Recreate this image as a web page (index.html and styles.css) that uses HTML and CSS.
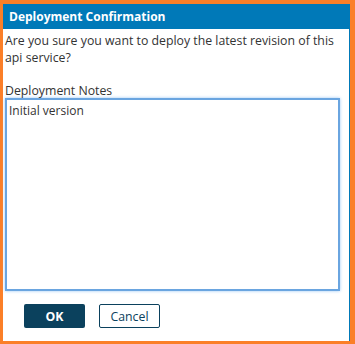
FILE: index.html
```html
<!DOCTYPE html>
<html lang="en">
<head>
  <meta charset="UTF-8">
  <title>Deployment Confirmation</title>
  <link rel="stylesheet" href="styles.css">
</head>
<body>
<div class="dialog">
  <div class="dialog-title">Deployment Confirmation</div>
  <div class="dialog-body">
    <p class="message">Are you sure you want to deploy the latest revision of this api service?</p>
    <label class="notes-label" for="notes">Deployment Notes</label>
    <textarea id="notes" class="notes">Initial version</textarea>
  </div>
  <div class="dialog-actions">
    <button class="btn btn-primary">OK</button>
    <button class="btn btn-secondary">Cancel</button>
  </div>
</div>
</body>
</html>
```

FILE: styles.css
```css
html, body {
  margin: 0;
  height: 100%;
}
body {
  background: #fb7f28;
  font-family: 'Open Sans', sans-serif;
  color: #333;
  padding: 4px 5px 3px 3px;
  box-sizing: border-box;
}
.dialog {
  background: #fff;
  height: 100%;
  border-right: 1px solid #0079b8;
  display: flex;
  flex-direction: column;
}
.dialog-title {
  background: #0079b8;
  color: #fff;
  font-weight: 700;
  font-size: 12px;
  height: 25px;
  line-height: 25px;
  padding-left: 6px;
}
.dialog-body {
  padding: 3px 8px 0 2px;
}
.message {
  margin: 0;
  font-size: 12.3px;
  line-height: 17px;
}
.notes-label {
  display: block;
  margin-top: 17px;
  font-size: 12.3px;
  line-height: 15px;
}
.notes {
  display: block;
  box-sizing: border-box;
  width: 335px;
  height: 193px;
  margin: 0;
  border: 2px solid #6aa5e0;
  box-shadow: 0 0 3px #9cc8f5;
  font-family: 'Open Sans', sans-serif;
  font-size: 12px;
  color: #333;
  padding: 2px;
  resize: none;
  outline: none;
}
.dialog-actions {
  display: flex;
  gap: 14px;
  padding: 13px 0 0 21px;
}
.btn {
  width: 61px;
  height: 24px;
  font-family: 'Open Sans', sans-serif;
  font-size: 12.3px;
  border-radius: 2px;
  cursor: pointer;
  padding: 0;
}
.btn-primary {
  background: #0b415d;
  color: #fff;
  font-weight: 700;
  border: none;
}
.btn-secondary {
  background: #fff;
  color: #0b415d;
  border: 1px solid #0b415d;
}
```
